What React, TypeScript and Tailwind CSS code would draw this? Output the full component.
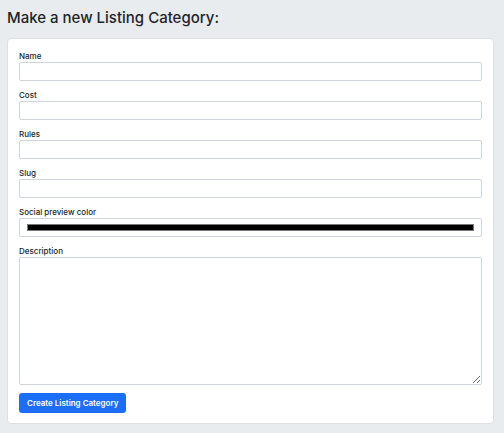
import { useState } from "react";

const FIELDS = ["Name", "Cost", "Rules", "Slug"];

export default function App() {
  const [values, setValues] = useState<Record<string, string>>({});

  return (
    <div className="min-h-screen bg-[#e9ecef] pl-[7px] pr-[10px] pt-[6px] pb-[9px] font-['Inter',sans-serif] text-[#212529]">
      <h1 className="mb-[8px] text-[15px] font-medium leading-[24px]">
        Make a new Listing Category:
      </h1>

      <form
        className="rounded-[4px] border border-[#dcdfe3] bg-white px-[11px] pt-[12px] pb-[10px]"
        onSubmit={(e) => e.preventDefault()}
      >
        {FIELDS.map((f) => (
          <div key={f} className="mb-[9px]">
            <label className="mb-[1px] block text-[8px] font-medium leading-[10px]">{f}</label>
            <input
              type="text"
              value={values[f] ?? ""}
              onChange={(e) => setValues({ ...values, [f]: e.target.value })}
              className="block h-[19px] w-full rounded-[2px] border border-[#ced4da] bg-white px-[4px] text-[8px] outline-none"
            />
          </div>
        ))}

        {/* Social preview color */}
        <div className="mb-[9px]">
          <label className="mb-[1px] block text-[8px] font-medium leading-[10px]">Social preview color</label>
          <div className="flex h-[19px] w-full items-center rounded-[2px] border border-[#ced4da] bg-white px-[7px]">
            <div className="h-[7px] w-full border border-[#777] bg-black" />
          </div>
        </div>

        {/* Description */}
        <div className="mb-[8px]">
          <label className="mb-[1px] block text-[8px] font-medium leading-[10px]">Description</label>
          <textarea className="block h-[128px] w-full rounded-[2px] border border-[#ced4da] bg-white px-[4px] text-[8px] outline-none" />
        </div>

        <button
          type="submit"
          className="block h-[20px] rounded-[3px] bg-[#1b6ef5] px-[8px] text-[8px] font-semibold leading-[20px] text-white"
        >
          Create Listing Category
        </button>
      </form>
    </div>
  );
}
